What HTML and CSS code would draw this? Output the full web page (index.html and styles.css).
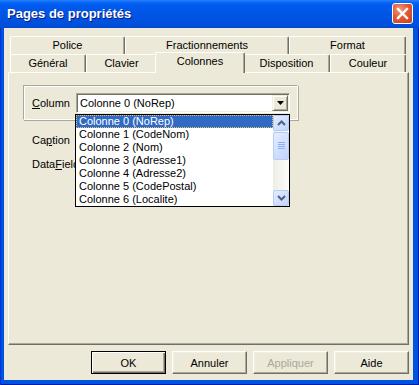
FILE: index.html
```html
<!DOCTYPE html>
<html lang="fr">
<head>
    <meta charset="UTF-8">
    <meta name="viewport" content="width=device-width, initial-scale=1.0">
    <title>Pages de propriétés</title>
    <link rel="stylesheet" href="styles.css">
</head>
<body>
    <div class="window">
        <div class="titlebar">
            <span class="title">Pages de propriétés</span>
            <div class="close">
                <svg width="13" height="13" viewBox="0 0 13 13"><path d="M2 2 L11 11 M11 2 L2 11" stroke="#fff" stroke-width="2.4" stroke-linecap="square"/></svg>
            </div>
        </div>
        <div class="client">
            <div class="tabs">
                <div class="tab-row">
                    <div class="tab w-police">Police</div>
                    <div class="tab w-fract">Fractionnements</div>
                    <div class="tab w-format">Format</div>
                </div>
                <div class="tab-row">
                    <div class="tab w-general">Général</div>
                    <div class="tab w-clavier">Clavier</div>
                    <div class="tab selected">Colonnes</div>
                    <div class="tab w-dispo">Disposition</div>
                    <div class="tab w-couleur">Couleur</div>
                </div>
            </div>
            <div class="panel">
                <div class="group">
                    <span class="group-label"><u>C</u>olumn</span>
                    <div class="combo">
                        <span class="combo-value">Colonne 0 (NoRep)</span>
                        <span class="combo-btn">
                            <svg width="7" height="4" viewBox="0 0 7 4"><path d="M0 0 H7 L3.5 4 Z" fill="#000"/></svg>
                        </span>
                        <div class="dropdown">
                            <div class="items">
                                <div class="item active">Colonne 0 (NoRep)</div>
                                <div class="item">Colonne 1 (CodeNom)</div>
                                <div class="item">Colonne 2 (Nom)</div>
                                <div class="item">Colonne 3 (Adresse1)</div>
                                <div class="item">Colonne 4 (Adresse2)</div>
                                <div class="item">Colonne 5 (CodePostal)</div>
                                <div class="item">Colonne 6 (Localite)</div>
                            </div>
                            <div class="scrollbar">
                                <div class="sb-btn">
                                    <svg width="9" height="6" viewBox="0 0 9 6"><path d="M1 5 L4.5 1.5 L8 5" fill="none" stroke="#4D6185" stroke-width="2"/></svg>
                                </div>
                                <div class="sb-thumb">
                                    <svg width="7" height="8" viewBox="0 0 7 8"><path d="M0 0.5 H7 M0 2.5 H7 M0 4.5 H7 M0 6.5 H7" stroke="#8CB0F8" stroke-width="1"/></svg>
                                </div>
                                <div class="sb-track"></div>
                                <div class="sb-btn">
                                    <svg width="9" height="6" viewBox="0 0 9 6"><path d="M1 1 L4.5 4.5 L8 1" fill="none" stroke="#4D6185" stroke-width="2"/></svg>
                                </div>
                            </div>
                        </div>
                    </div>
                </div>
                <div class="field first">Ca<u>p</u>tion</div>
                <div class="field">Data<u>F</u>ield</div>
            </div>
            <div class="buttons">
                <div class="btn default">OK</div>
                <div class="btn">Annuler</div>
                <div class="btn disabled">Appliquer</div>
                <div class="btn">Aide</div>
            </div>
        </div>
    </div>
</body>
</html>
```

FILE: styles.css
```css
body { margin: 0; font-family: "Liberation Sans", Tahoma, sans-serif; font-size: 11px; color: #000; }

.window {
    width: 419px;
    height: 385px;
    display: flex;
    flex-direction: column;
    background: #0052E0;
    box-shadow: inset 1px 0 #0831D9, inset -1px 0 #001EA0, inset 0 -1px #001EA0;
}

/* title bar */
.titlebar {
    height: 28px;
    flex-shrink: 0;
    display: flex;
    align-items: center;
    justify-content: space-between;
    background: linear-gradient(#2C84FB 0, #0A6AF8 2px, #005CF0 5px, #0055E5 12px, #0054E3 60%, #004FDA 90%, #0049D0 100%);
}
.title {
    padding-left: 7px;
    padding-bottom: 1px;
    color: #fff;
    font-weight: bold;
    font-size: 13px;
    text-shadow: 1px 1px #0A1883;
}
.close {
    width: 19px;
    height: 19px;
    margin-right: 6px;
    margin-top: -1px;
    border: 1px solid #fff;
    border-radius: 3px;
    background: radial-gradient(circle at 35% 30%, #F09A80 0, #E25A35 45%, #C2401E 100%);
    display: flex;
    align-items: center;
    justify-content: center;
}

/* client area */
.client {
    flex: 1;
    margin: 0 6px 5px 4px;
    padding-top: 8px;
    background: #ECE9D8;
    display: flex;
    flex-direction: column;
}

.tabs { margin-left: 6px; }
.tab-row { display: flex; height: 18px; }
.tab {
    box-sizing: border-box;
    height: 18px;
    display: flex;
    align-items: center;
    justify-content: center;
    padding-bottom: 1px;
    background: #ECE9D8;
    border-top: 1px solid #fff;
    border-left: 1px solid #fff;
    border-right: 1px solid #716F64;
    border-radius: 2px 2px 0 0;
    box-shadow: inset -1px 0 #ACA899;
}
.w-police { width: 115px; }
.w-fract { width: 164px; }
.w-format { width: 117px; }
.w-general { width: 76px; }
.w-clavier { width: 71px; }
.w-dispo { width: 87px; }
.w-couleur { width: 76px; }
.tab.selected {
    position: relative;
    z-index: 2;
    width: 90px;
    height: 21px;
    margin: -2px -2px 0;
    padding-bottom: 4px;
}

/* page */
.panel {
    box-sizing: border-box;
    margin-left: 4px;
    width: 401px;
    height: 273px;
    padding: 12px 0 0 14px;
    border: 1px solid;
    border-color: #fff #716F64 #716F64 #fff;
    box-shadow: inset -1px -1px #ACA899;
}

.group {
    box-sizing: border-box;
    width: 275px;
    height: 35px;
    display: flex;
    align-items: center;
    border: 1px solid;
    border-color: #ACA899 #fff #fff #ACA899;
    box-shadow: inset 1px 1px #fff, 1px 1px #ACA899;
}
.group-label { width: 44px; padding-left: 8px; }

.combo {
    position: relative;
    box-sizing: border-box;
    width: 214px;
    height: 20px;
    display: flex;
    align-items: center;
    background: #fff;
    border: 1px solid;
    border-color: #ACA899 #fff #fff #ACA899;
    box-shadow: inset 1px 1px #716F64, inset -1px -1px #F1EFE2;
}
.combo-value { flex: 1; padding-left: 3px; }
.combo-btn {
    box-sizing: border-box;
    width: 16px;
    height: 16px;
    margin-right: 1px;
    display: flex;
    align-items: center;
    justify-content: center;
    background: #ECE9D8;
    border: 1px solid;
    border-color: #F1EFE2 #716F64 #716F64 #F1EFE2;
    box-shadow: inset 1px 1px #fff, inset -1px -1px #ACA899;
}

.dropdown {
    position: absolute;
    z-index: 5;
    left: -2px;
    top: 20px;
    box-sizing: border-box;
    width: 215px;
    height: 93px;
    display: flex;
    background: #fff;
    border: 1px solid #000;
}
.items { flex: 1; }
.item { height: 13px; line-height: 13px; padding-left: 3px; white-space: nowrap; }
.item.active {
    box-sizing: border-box;
    background: #316AC5;
    color: #fff;
    border: 1px dotted #E6C46E;
    line-height: 11px;
    padding-left: 2px;
}

.scrollbar {
    width: 16px;
    display: flex;
    flex-direction: column;
    background: linear-gradient(90deg, #EEEDE5, #FDFDFA);
}
.sb-btn, .sb-thumb {
    box-sizing: border-box;
    display: flex;
    align-items: center;
    justify-content: center;
    border: 1px solid #B6CBF5;
    border-radius: 2px;
    background: linear-gradient(135deg, #E3EDFF, #C2D4FC);
}
.sb-btn { height: 16px; }
.sb-thumb { height: 28px; margin-top: 1px; }
.sb-track { flex: 1; }

.field { padding-left: 9px; line-height: 14px; }
.field.first { margin-top: 13px; }
.field + .field { margin-top: 10px; }

/* buttons */
.buttons {
    display: flex;
    justify-content: flex-end;
    gap: 6px;
    padding-right: 4px;
    margin-top: 6px;
}
.btn {
    box-sizing: border-box;
    width: 75px;
    height: 23px;
    display: flex;
    align-items: center;
    justify-content: center;
    background: #ECE9D8;
    border: 1px solid;
    border-color: #fff #716F64 #716F64 #fff;
    box-shadow: inset -1px -1px #ACA899, inset 1px 1px #F1EFE2;
}
.btn.default {
    border-color: #000;
    box-shadow: inset 1px 1px #fff, inset -1px -1px #716F64, inset -2px -2px #ACA899;
}
.btn.disabled { color: #ACA899; }
```
